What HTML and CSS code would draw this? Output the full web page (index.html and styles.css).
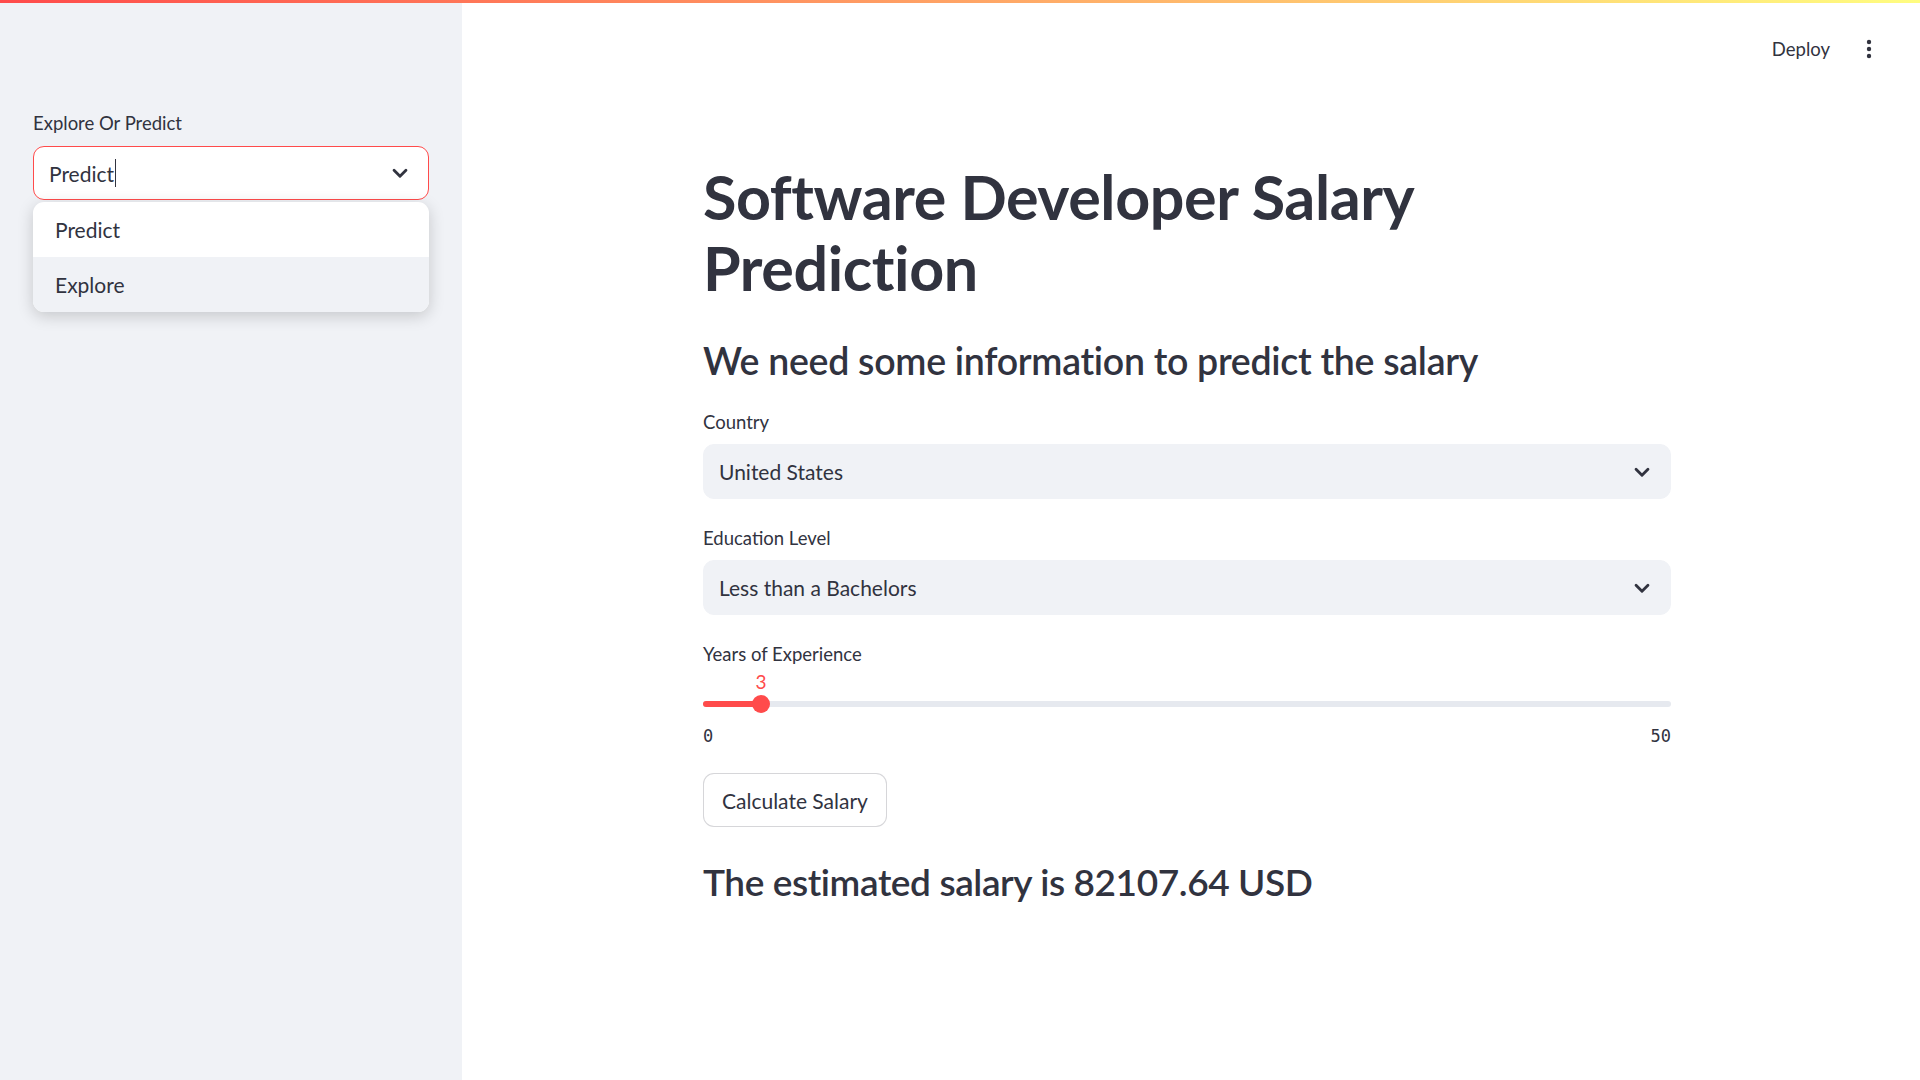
FILE: index.html
```html
<!DOCTYPE html>
<html lang="en">
<head>
<meta charset="utf-8">
<title>Software Developer Salary Prediction</title>
<link rel="stylesheet" href="styles.css">
</head>
<body>
<div class="topbar"></div>
<div class="app">
  <aside class="sidebar">
    <div class="label label-side">Explore Or Predict</div>
    <div class="select-wrap">
      <div class="select select-focused">
        <span class="value">Predict<span class="caret"></span></span>
        <svg class="chev" viewBox="0 0 24 24" width="26" height="26"><polyline points="6.5,9.5 12,15 17.5,9.5" fill="none" stroke="#31333f" stroke-width="2.6" stroke-linecap="round" stroke-linejoin="round"/></svg>
      </div>
      <ul class="menu">
        <li class="opt">Predict</li>
        <li class="opt opt-hover">Explore</li>
      </ul>
    </div>
  </aside>
  <main class="main">
    <header class="header">
      <span class="deploy">Deploy</span>
      <svg class="dots" viewBox="0 0 6 20" width="6" height="20"><circle cx="3" cy="3" r="2.2" fill="#31333f"/><circle cx="3" cy="10" r="2.2" fill="#31333f"/><circle cx="3" cy="17" r="2.2" fill="#31333f"/></svg>
    </header>
    <div class="block">
      <h1 class="title">Software Developer Salary<br>Prediction</h1>
      <h3 class="sub">We need some information to predict the salary</h3>

      <div class="label">Country</div>
      <div class="select">
        <span class="value">United States</span>
        <svg class="chev" viewBox="0 0 24 24" width="26" height="26"><polyline points="6.5,9.5 12,15 17.5,9.5" fill="none" stroke="#31333f" stroke-width="2.6" stroke-linecap="round" stroke-linejoin="round"/></svg>
      </div>

      <div class="label label-gap">Education Level</div>
      <div class="select">
        <span class="value">Less than a Bachelors</span>
        <svg class="chev" viewBox="0 0 24 24" width="26" height="26"><polyline points="6.5,9.5 12,15 17.5,9.5" fill="none" stroke="#31333f" stroke-width="2.6" stroke-linecap="round" stroke-linejoin="round"/></svg>
      </div>

      <div class="label label-gap">Years of Experience</div>
      <div class="slider">
        <div class="thumb-value" style="left: 6%">3</div>
        <div class="track">
          <div class="fill" style="width: 6%"></div>
          <div class="thumb" style="left: 6%"></div>
        </div>
      </div>
      <div class="ticks"><span>0</span><span>50</span></div>

      <button class="btn">Calculate Salary</button>

      <h3 class="result">The estimated salary is 82107.64 USD</h3>
    </div>
  </main>
</div>
</body>
</html>
```
FILE: styles.css
```css
* { box-sizing: border-box; }
html, body { margin: 0; padding: 0; }
body {
  width: 1920px;
  height: 1080px;
  overflow: hidden;
  font-family: "Lato", "Liberation Sans", sans-serif;
  color: #31333f;
  background: #ffffff;
}
.topbar {
  height: 3px;
  background: linear-gradient(90deg, #ff4b4b 0%, #fffd80 100%);
}
.app {
  display: flex;
  height: 1077px;
}
.sidebar {
  width: 462px;
  flex: none;
  background: #f0f2f6;
  padding: 107px 33px 0 33px;
}
.label {
  font-size: 18.5px;
  line-height: 26px;
  color: #31333f;
  margin-bottom: 9px;
}
.label-side { margin-bottom: 10px; }
.label-gap { margin-top: 26px; }
.select-wrap { position: relative; }
.select {
  height: 55px;
  background: #f0f2f6;
  border: 1px solid #f0f2f6;
  border-radius: 11px;
  display: flex;
  align-items: center;
  justify-content: space-between;
  padding: 0 15px 0 15px;
  font-size: 21px;
}
.select-focused {
  background: #ffffff;
  border-color: #ff4b4b;
  height: 54px;
}
.value { display: inline-flex; align-items: center; }
.caret {
  display: inline-block;
  width: 1px;
  height: 28px;
  background: #31333f;
  margin-left: 1px;
}
.chev { display: block; }
.menu {
  position: absolute;
  left: 0;
  right: 0;
  top: calc(100% + 2px);
  margin: 0;
  padding: 0;
  list-style: none;
  background: #ffffff;
  border-radius: 11px;
  overflow: hidden;
  box-shadow: 0 4px 16px rgba(0, 0, 0, 0.18);
}
.opt {
  height: 55px;
  display: flex;
  align-items: center;
  padding-left: 22px;
  font-size: 21px;
  color: #31333f;
}
.opt-hover { background: #f0f2f6; }
.main {
  flex: 1;
  display: flex;
  flex-direction: column;
}
.header {
  height: 92px;
  display: flex;
  align-items: center;
  justify-content: flex-end;
  padding-right: 48px;
  gap: 36px;
}
.deploy { font-size: 18.5px; color: #31333f; }
.dots { display: block; }
.block {
  width: 968px;
  margin-left: 241px;
  padding-top: 66px;
}
.title {
  margin: 0;
  font-size: 61px;
  line-height: 71px;
  font-weight: 700;
  letter-spacing: -0.4px;
  color: #31333f;
}
.sub {
  margin: 35px 0 25px 0;
  font-size: 37.5px;
  line-height: 46px;
  font-weight: 600;
  letter-spacing: -0.3px;
  color: #31333f;
}
.slider {
  position: relative;
  height: 41px;
  padding-top: 21px;
}
.thumb-value {
  position: absolute;
  top: -5px;
  transform: translateX(-50%);
  font-family: "Lato", "Liberation Sans", sans-serif;
  font-size: 19px;
  line-height: 22px;
  color: #ff4b4b;
}
.track {
  position: relative;
  height: 6px;
  margin-top: 4px;
  border-radius: 3px;
  background: #e6e9ef;
}
.fill {
  height: 6px;
  border-radius: 3px;
  background: #ff4b4b;
}
.thumb {
  position: absolute;
  top: 50%;
  width: 18px;
  height: 18px;
  border-radius: 50%;
  background: #ff4b4b;
  transform: translate(-50%, -50%);
}
.ticks {
  display: flex;
  justify-content: space-between;
  font-family: "DejaVu Sans Mono", "Liberation Mono", monospace;
  font-size: 17px;
  line-height: 22px;
  margin-top: 8px;
  color: #31333f;
}
.btn {
  display: block;
  margin-top: 26px;
  height: 54px;
  padding: 0 18px;
  background: #ffffff;
  border: 1px solid rgba(49, 51, 63, 0.2);
  border-radius: 11px;
  font-family: "Lato", "Liberation Sans", sans-serif;
  font-size: 21px;
  color: #31333f;
}
.result {
  margin: 32px 0 0 0;
  font-size: 37px;
  line-height: 46px;
  font-weight: 600;
  letter-spacing: -0.4px;
  color: #31333f;
}
```
